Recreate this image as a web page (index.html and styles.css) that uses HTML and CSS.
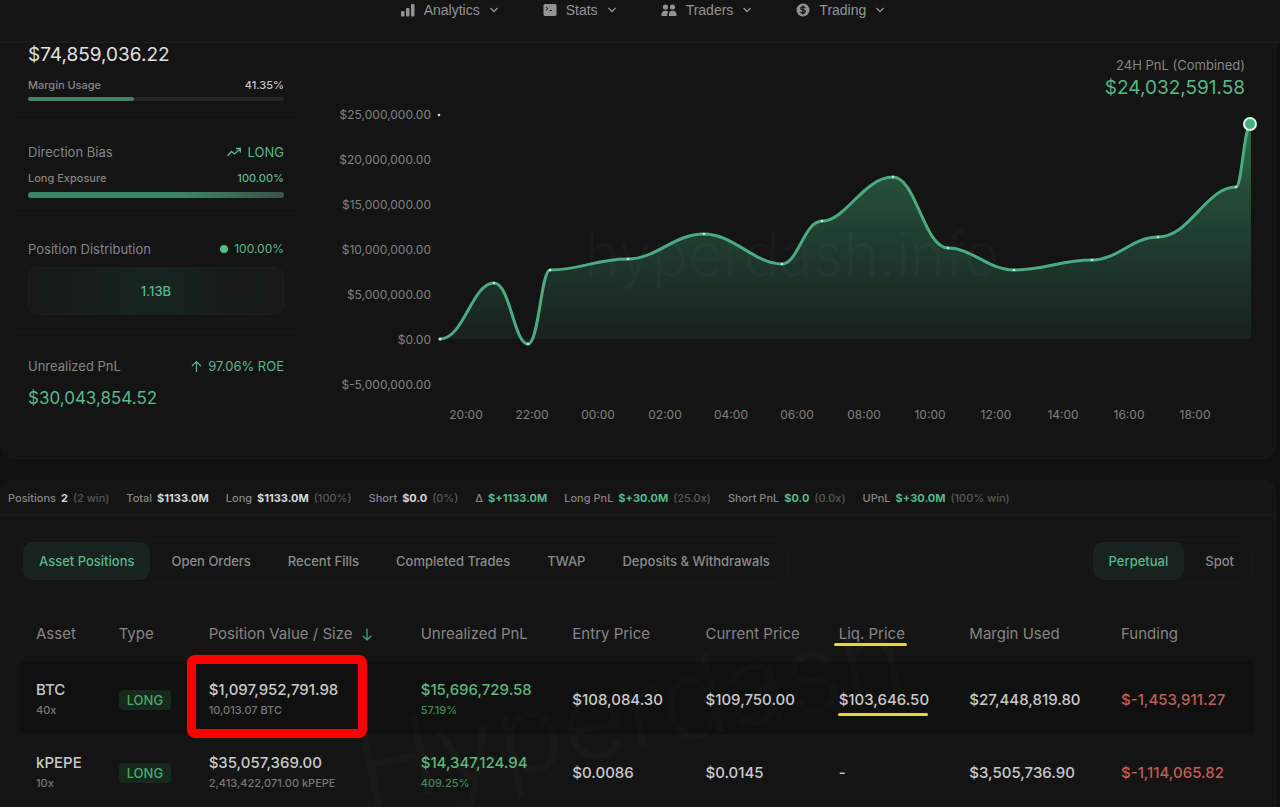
FILE: index.html
```html
<!DOCTYPE html>
<html lang="en">
<head>
<meta charset="utf-8">
<meta name="viewport" content="width=device-width, initial-scale=1">
<title>Trader overview</title>
<link rel="stylesheet" href="styles.css">
</head>
<body>
<header class="topbar">
  <nav class="nav" aria-label="Main">
    <button class="nav-item" type="button">
      <svg width="14" height="14" viewBox="0 0 14 14" fill="currentColor"><rect x="0" y="8" width="3.500" height="5.500" rx="1"/><rect x="5" y="5" width="3.500" height="8.500" rx="1"/><rect x="10" y="1" width="3.500" height="12.500" rx="1"/></svg>
      Analytics
      <svg class="chevron" width="10" height="6" viewBox="0 0 10 6"><path d="M1.500 1 5 4.500 8.500 1"/></svg>
    </button>
    <button class="nav-item" type="button">
      <svg width="14" height="14" viewBox="0 0 14 14"><rect x="0.500" y="1" width="13" height="12" rx="1.500" fill="currentColor"/><path d="m3 4 2 1.500L3 7M6.500 7.500H9" fill="none" stroke="#171717" stroke-width="1"/></svg>
      Stats
      <svg class="chevron" width="10" height="6" viewBox="0 0 10 6"><path d="M1.500 1 5 4.500 8.500 1"/></svg>
    </button>
    <button class="nav-item" type="button">
      <svg width="16" height="14" viewBox="0 0 16 14" fill="currentColor"><circle cx="4.500" cy="4" r="2.600"/><circle cx="11.500" cy="4" r="2.600"/><path d="M0.500 13v-2c0-2 1.500-3.300 4-3.300 1.300 0 2.300.4 3 1-.8.700-1.200 1.500-1.200 2.600V13zM8 13v-1.700c0-2.200 1.300-3.600 3.500-3.600 2.500 0 4 1.300 4 3.300v2z"/></svg>
      Traders
      <svg class="chevron" width="10" height="6" viewBox="0 0 10 6"><path d="M1.500 1 5 4.500 8.500 1"/></svg>
    </button>
    <button class="nav-item" type="button">
      <svg width="14" height="14" viewBox="0 0 14 14"><circle cx="7" cy="7" r="6.500" fill="currentColor"/><path d="M9.300 5.200C9 4.300 8.200 3.900 7 3.900c-1.300 0-2.200.6-2.200 1.500 0 2.200 4.500 1 4.500 3.200 0 1-.9 1.600-2.300 1.600-1.200 0-2.100-.5-2.400-1.400M7 2.600v8.800" fill="none" stroke="#171717" stroke-width="1.300"/></svg>
      Trading
      <svg class="chevron" width="10" height="6" viewBox="0 0 10 6"><path d="M1.500 1 5 4.500 8.500 1"/></svg>
    </button>
  </nav>
</header>

<main>
  <section class="overview">
    <aside class="summary">
      <div class="block equity">
        <div class="equity-value">$74,859,036.22</div>
        <div class="line small"><span>Margin Usage</span><span class="bright">41.35%</span></div>
        <div class="meter"><div class="meter-fill" style="width:41.35%"></div></div>
      </div>
      <div class="block bias">
        <div class="line"><span>Direction Bias</span>
          <span class="green tag"><svg width="16" height="12" viewBox="0 0 16 12" fill="none" stroke="currentColor" stroke-width="1.300"><path d="M1.500 10 5.500 5.500 8.500 8 14 3M10 2.500h4.300v4"/></svg>LONG</span></div>
        <div class="line small"><span>Long Exposure</span><span class="green">100.00%</span></div>
        <div class="meter exposure"><div class="meter-fill" style="width:100%"></div></div>
      </div>
      <div class="block distribution">
        <div class="line"><span>Position Distribution</span><span class="green tag pct"><i class="dot"></i>100.00%</span></div>
        <div class="dist-box">1.13B</div>
      </div>
      <div class="block upnl">
        <div class="line"><span>Unrealized PnL</span>
          <span class="green tag"><svg width="11" height="13" viewBox="0 0 11 13" fill="none" stroke="currentColor" stroke-width="1.200"><path d="M5.500 12V1.500M1 6l4.500-4.500L10 6"/></svg>97.06% ROE</span></div>
        <div class="upnl-value green">$30,043,854.52</div>
      </div>
    </aside>

    <div class="chart">
      <div class="chart-head">
        <div>24H PnL (Combined)</div>
        <div class="chart-total green">$24,032,591.58</div>
      </div>
      <svg class="chart-plot" viewBox="310 103 960 327" role="img" aria-label="24 hour combined PnL">
        <defs>
          <linearGradient id="area" gradientUnits="userSpaceOnUse" x1="0" y1="124" x2="0" y2="340">
            <stop offset="0" stop-color="#287052"/>
            <stop offset="0.300" stop-color="#254c38"/>
            <stop offset="0.600" stop-color="#1e392e"/>
            <stop offset="1" stop-color="#18201d"/>
          </linearGradient>
        </defs>
        <path fill="url(#area)" d="M440 339C464 339 472 283 494 283C510 283 514 344 528 344C539 344 541 270 550 270C582 270 594 259 628 259C656 259 674 234 704 234C734 234 754 264 782 264C798 264 804 221 822 221C846 221 864 177 893 177C916 177 924 248 948 248C972 248 988 270 1014 270C1046 270 1060 260 1092 260C1118 260 1132 237 1158 237C1190 237 1206 187 1236 187C1242 187 1244 124 1251 124V339Z"/>
        <text class="plot-mark" x="792" y="276" text-anchor="middle">hyperdash.info</text>
        <path class="curve" d="M440 339C464 339 472 283 494 283C510 283 514 344 528 344C539 344 541 270 550 270C582 270 594 259 628 259C656 259 674 234 704 234C734 234 754 264 782 264C798 264 804 221 822 221C846 221 864 177 893 177C916 177 924 248 948 248C972 248 988 270 1014 270C1046 270 1060 260 1092 260C1118 260 1132 237 1158 237C1190 237 1206 187 1236 187C1242 187 1244 124 1251 124"/>
        <g fill="#c4e6d6">
          <circle cx="439" cy="115" r="1.300"/><circle cx="440" cy="339" r="1.600"/><circle cx="494" cy="283" r="1.300"/><circle cx="528" cy="344" r="1.300"/><circle cx="550" cy="270" r="1.300"/><circle cx="628" cy="259" r="1.300"/><circle cx="704" cy="234" r="1.300"/><circle cx="782" cy="264" r="1.300"/><circle cx="822" cy="221" r="1.300"/><circle cx="893" cy="177" r="1.300"/><circle cx="948" cy="248" r="1.300"/><circle cx="1014" cy="270" r="1.300"/><circle cx="1092" cy="260" r="1.300"/><circle cx="1158" cy="237" r="1.300"/><circle cx="1236" cy="187" r="1.300"/>
        </g>
        <circle cx="1250" cy="124" r="6" fill="#43ae82" stroke="#d9f5e6" stroke-width="2"/>
        <g class="axis" text-anchor="end">
          <text x="431" y="119">$25,000,000.00</text><text x="431" y="164">$20,000,000.00</text><text x="431" y="209">$15,000,000.00</text><text x="431" y="254">$10,000,000.00</text><text x="431" y="299">$5,000,000.00</text><text x="431" y="344">$0.00</text><text x="431" y="389">$-5,000,000.00</text>
        </g>
        <g class="axis" text-anchor="middle">
          <text x="466" y="419">20:00</text><text x="532" y="419">22:00</text><text x="598" y="419">00:00</text><text x="665" y="419">02:00</text><text x="731" y="419">04:00</text><text x="797" y="419">06:00</text><text x="864" y="419">08:00</text><text x="930" y="419">10:00</text><text x="996" y="419">12:00</text><text x="1063" y="419">14:00</text><text x="1129" y="419">16:00</text><text x="1195" y="419">18:00</text>
        </g>
      </svg>
    </div>
  </section>

  <section class="positions">
    <div class="stats">
      <span class="stat">Positions <b>2</b> <em>(2 win)</em></span>
      <span class="stat">Total <b>$1133.0M</b></span>
      <span class="stat">Long <b>$1133.0M</b> <em>(100%)</em></span>
      <span class="stat">Short <b>$0.0</b> <em>(0%)</em></span>
      <span class="stat">Δ <b class="green">$+1133.0M</b></span>
      <span class="stat">Long PnL <b class="green">$+30.0M</b> <em>(25.0x)</em></span>
      <span class="stat">Short PnL <b class="green">$0.0</b> <em>(0.0x)</em></span>
      <span class="stat">UPnL <b class="green">$+30.0M</b> <em>(100% win)</em></span>
    </div>

    <div class="toolbar">
      <div class="tabs">
        <button class="tab active" type="button">Asset Positions</button>
        <button class="tab" type="button">Open Orders</button>
        <button class="tab" type="button">Recent Fills</button>
        <button class="tab" type="button">Completed Trades</button>
        <button class="tab" type="button">TWAP</button>
        <button class="tab" type="button">Deposits &amp; Withdrawals</button>
      </div>
      <div class="tabs">
        <button class="tab active" type="button">Perpetual</button>
        <button class="tab" type="button">Spot</button>
      </div>
    </div>

    <div class="table-wrap">
      <div class="watermark" aria-hidden="true">Hyperdash</div>
      <table class="table">
        <colgroup><col class="c-asset"><col class="c-type"><col class="c-value"><col class="c-pnl"><col class="c-price"><col class="c-price"><col class="c-liq"><col class="c-pnl"><col></colgroup>
        <thead>
          <tr><th>Asset</th><th>Type</th><th>Position Value / Size <svg class="sort" width="10" height="13" viewBox="0 0 10 13" fill="none" stroke="#3f9c75" stroke-width="1.400"><path d="M5 0.500V12M0.800 7.800 5 12l4.200-4.200"/></svg></th><th>Unrealized PnL</th><th>Entry Price</th><th>Current Price</th><th><span class="marked head">Liq. Price</span></th><th>Margin Used</th><th>Funding</th></tr>
        </thead>
        <tbody>
          <tr class="shade">
            <td>BTC<small>40x</small></td><td><span class="badge">LONG</span></td>
            <td class="boxed">$1,097,952,791.98<small>10,013.07 BTC</small></td>
            <td class="gain">$15,696,729.58<small>57.19%</small></td>
            <td>$108,084.30</td><td>$109,750.00</td><td><span class="marked">$103,646.50</span></td><td>$27,448,819.80</td><td class="loss">$-1,453,911.27</td>
          </tr>
          <tr>
            <td>kPEPE<small>10x</small></td><td><span class="badge">LONG</span></td>
            <td>$35,057,369.00<small>2,413,422,071.00 kPEPE</small></td>
            <td class="gain">$14,347,124.94<small>409.25%</small></td>
            <td>$0.0086</td><td>$0.0145</td><td>-</td><td>$3,505,736.90</td><td class="loss">$-1,114,065.82</td>
          </tr>
        </tbody>
      </table>
    </div>
  </section>
</main>
</body>
</html>
```

FILE: styles.css
```css
*, *::before, *::after { box-sizing: border-box; }

body {
  margin: 0;
  background: #101010;
  color: #858585;
  font-family: Inter, "Liberation Sans", sans-serif;
  font-size: 13px;
  line-height: 16px;
}

button {
  border: 0;
  background: none;
  color: inherit;
  font: inherit;
  cursor: pointer;
}

.green { color: #56b98b; }
.bright { color: #c4c4c4; }

/* Top navigation */
.topbar {
  height: 43px;
  background: #141414;
  border-bottom: 2px solid #1a1a1a;
}
.nav {
  display: flex;
  justify-content: center;
  gap: 44px;
  padding-left: 6px;
}
.nav-item {
  display: flex;
  align-items: center;
  gap: 9px;
  height: 20px;
  padding: 0;
  color: #939393;
  font-family: "Liberation Sans", sans-serif;
  font-size: 14px;
}
.chevron {
  fill: none;
  stroke: currentColor;
  stroke-width: 1.3;
}

/* Account overview */
.overview {
  display: grid;
  grid-template-columns: 310px 1fr;
  margin-right: 4px;
  padding-bottom: 28px;
  background: #141414;
  border-bottom: 1px solid #191919;
  border-right: 1px solid #191919;
  border-radius: 0 0 14px 14px;
}
.summary { padding: 0 10px 0 14px; }
.block {
  padding: 0 16px 0 14px;
  border-bottom: 1px solid #191919;
}
.line {
  display: flex;
  justify-content: space-between;
  align-items: center;
}
.line.small {
  font-size: 11px;
  font-weight: 500;
}
.tag {
  display: flex;
  align-items: center;
  gap: 6px;
}
.pct { font-size: 12px; }
.equity { height: 72px; }
.equity-value {
  margin-bottom: 11px;
  color: #e0e0e0;
  font-size: 19px;
  line-height: 23px;
}
.meter {
  height: 4px;
  margin-top: 4px;
  border-radius: 4px;
  background: #262626;
}
.meter-fill {
  height: 100%;
  border-radius: 4px;
  background: #3d8565;
}
.bias {
  height: 99px;
  padding-top: 29px;
}
.bias .small { margin-top: 10px; }
.exposure { height: 6px; margin-top: 6px; }
.exposure .meter-fill { background: linear-gradient(90deg, #3d8565 60%, #3b5148); }
.distribution {
  height: 118px;
  padding-top: 27px;
}
.dot {
  width: 8px;
  height: 8px;
  border-radius: 50%;
  background: #56b98b;
}
.dist-box {
  display: grid;
  place-items: center;
  height: 48px;
  margin-top: 10px;
  border: 1px solid #1b1e1d;
  border-radius: 10px;
  background: linear-gradient(90deg, #171817, #162520 50%, #171b19 80%, #191919);
  color: #56b98b;
  font-weight: 500;
}
.upnl {
  padding-top: 26px;
  border-bottom: 0;
}
.upnl-value {
  margin-top: 12px;
  font-size: 17px;
  line-height: 24px;
}

/* PnL chart */
.chart { padding-right: 5px; }
.chart-head {
  padding: 14px 25px 0 0;
  text-align: right;
}
.chart-total {
  font-size: 19px;
  line-height: 30px;
}
.chart-plot {
  display: block;
  width: 100%;
}
.axis {
  fill: #808080;
  font-size: 12px;
}
.plot-mark {
  fill: #fff;
  fill-opacity: 0.025;
  font-size: 60px;
  font-weight: 300;
}
.curve {
  fill: none;
  stroke: #4caa81;
  stroke-width: 3;
}

/* Positions panel */
.positions {
  margin: 21px 4px 0 0;
  overflow: hidden;
  background: #141414;
  border-top: 1px solid #171717;
  border-right: 1px solid #191919;
  border-radius: 14px 14px 0 0;
}
.stats {
  display: flex;
  gap: 17px;
  padding: 9px 8px 8px;
  border-bottom: 2px solid #1a1a1a;
  font-size: 11px;
  font-weight: 500;
  white-space: nowrap;
}
.stat {
  display: flex;
  gap: 5px;
}
.stat b { font-weight: 700; }
.stat b:not(.green) { color: #d8d8d8; }
.stat em {
  color: #585858;
  font-style: normal;
}
.toolbar {
  display: flex;
  justify-content: space-between;
  padding: 23px 22px 0 20px;
}
.tabs {
  display: flex;
  gap: 5px;
  padding: 2px;
  border: 1px solid #181818;
  border-radius: 12px;
}
.tab {
  height: 38px;
  padding: 0 16px;
  border-radius: 10px;
  color: #8b8b8b;
  font-weight: 500;
  white-space: nowrap;
}
.tab.active {
  background: #18221e;
  color: #56b98b;
}

.table-wrap {
  position: relative;
  padding: 24px 22px 0 20px;
}
.watermark {
  position: absolute;
  left: 350px;
  top: 58px;
  color: #fff;
  font-size: 110px;
  font-weight: 300;
  line-height: 140px;
  opacity: 0.014;
  transform: rotate(-12deg);
}
.table {
  position: relative;
  width: 100%;
  table-layout: fixed;
  border-collapse: collapse;
  text-align: left;
  white-space: nowrap;
}
.c-asset { width: 8%; }
.c-type { width: 7.3%; }
.c-value { width: 17.2%; }
.c-pnl { width: 12.3%; }
.c-price { width: 10.8%; }
.c-liq { width: 10.6%; }
.table th {
  height: 54px;
  padding: 0;
  font-size: 15px;
  font-weight: 400;
}
.table td {
  height: 73px;
  padding: 4px 0 0;
  color: #c9c9c9;
  font-size: 15px;
  font-weight: 500;
  line-height: 20px;
}
.table th:first-child,
.table td:first-child { padding-left: 16px; }
.table small {
  display: block;
  color: #777;
  font-size: 11px;
}
.sort { margin-left: 5px; vertical-align: -2px; }
.shade { background: rgb(0 0 0 / 0.2); }
.table .gain { color: #5fb67c; }
.table .gain small { color: #3f8a5b; }
.table .loss { color: #c05d57; }
.badge {
  display: inline-block;
  padding: 0 8px;
  border-radius: 4px;
  background: #16291d;
  color: #4fa56c;
  font-size: 13px;
}

/* Highlights drawn over the table */
.boxed { position: relative; }
.boxed::after {
  content: "";
  position: absolute;
  top: -6px;
  left: -22px;
  width: 180px;
  height: 83px;
  border: 9px solid #fe0000;
  border-radius: 8px;
}
.marked { position: relative; }
.marked::after {
  content: "";
  position: absolute;
  left: -1px;
  right: 1px;
  bottom: -7px;
  height: 3px;
  border-radius: 2px;
  background: #dedc32;
}
.marked.head::after {
  left: -5px;
  right: -2px;
  bottom: -3px;
}
```
